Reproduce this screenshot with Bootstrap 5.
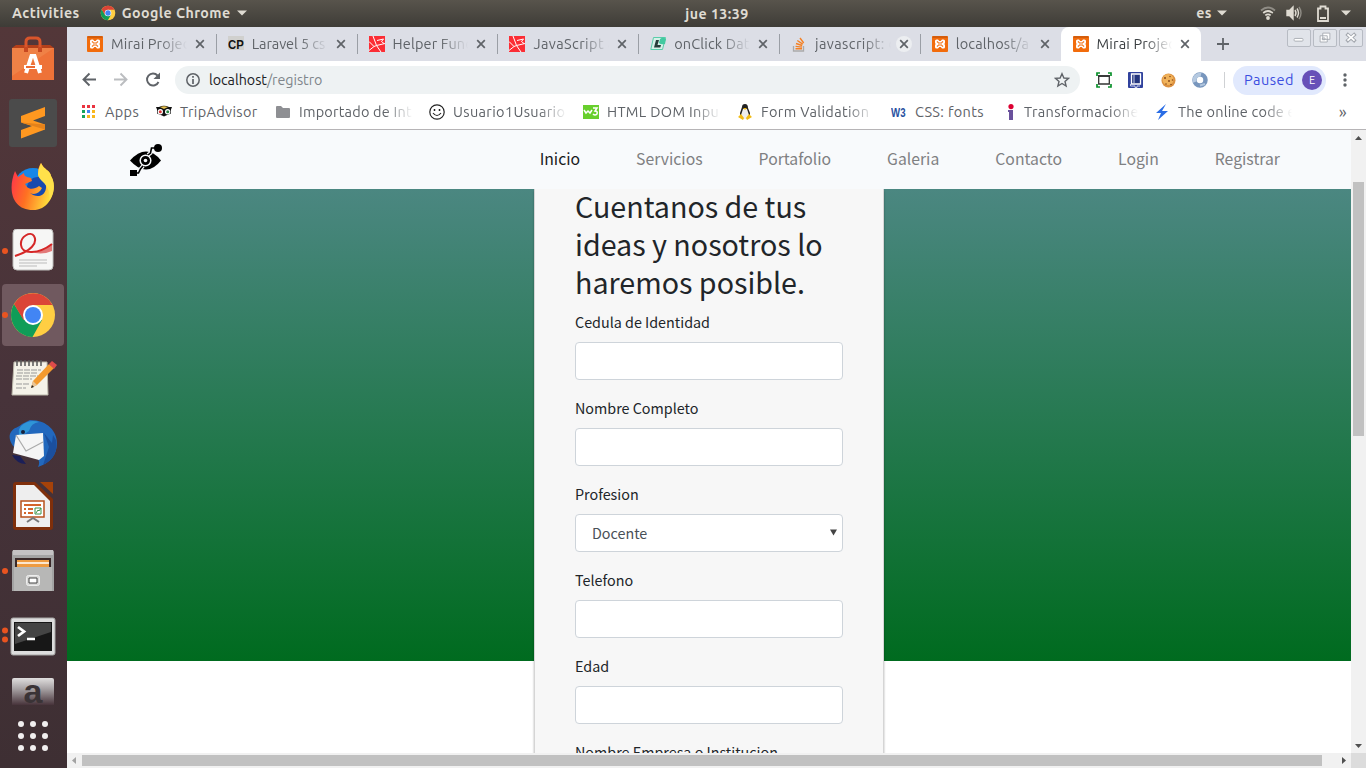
<!DOCTYPE html>
<html lang="es">
<head>
<meta charset="utf-8">
<title>Mirai Project</title>
<link href="https://cdn.jsdelivr.net/npm/bootstrap@5.3.0/dist/css/bootstrap.min.css" rel="stylesheet">
<style>
body{width:1366px;height:768px;overflow:hidden;font:14.5px/20px Ubuntu,"Noto Sans",sans-serif;color:#5f6368;background:#fff}
svg{display:block;flex:none}
.panel{height:27px;background:linear-gradient(#58544c,#3e3c37);color:#dfdbd2;font-weight:700;font-size:14.2px;letter-spacing:.45px;padding:0 15px 1px 12px}
.dock{width:67px;padding-right:1px;background:linear-gradient(#533739,#47333a 50%,#3e2f33)}
.launcher{height:64px;flex:none}
.launcher.chosen::before{content:"";position:absolute;left:2px;top:1px;width:62px;height:62px;border-radius:4px;background:#70595f}
.launcher svg{position:relative}
.dots{position:absolute;left:2px;top:50%;transform:translateY(-50%)}
.dots i{display:block;width:6px;height:6px;border-radius:50%;background:#e95420;margin:3px 0}
.tabstrip{height:34px;background:#dcdee6;padding-left:8px}
.tab{width:140.8px;padding:0 8px 0 12px;flex:none;position:relative;letter-spacing:.15px}
.tab+.tab:not(.current)::before{content:"";position:absolute;left:0;top:7px;height:20px;width:1px;background:#9a9ea5}
.tab.current{background:#fff;border-radius:8px 8px 0 0;color:#3c4043}
.fade-text{flex:1;min-width:0;overflow:hidden;white-space:nowrap;-webkit-mask-image:linear-gradient(90deg,#000 calc(100% - 28px),transparent);mask-image:linear-gradient(90deg,#000 calc(100% - 28px),transparent)}
.tab .fade-text{margin:0 5px 0 8px}
.knob{width:16px;height:16px;border-radius:50%;flex:none}
.knob.lit{background:#eceef1}
.winbtns{margin-left:auto;padding:2px 3px 0 0;gap:2px}
.winbtns svg{background:#e1e4ea;border:1px solid #b7bbc3;border-radius:2px}
.toolbar{height:37px;background:#fff;padding:1px 19px 0 14px}
.address{width:905px;height:28px;border-radius:14px;background:#eef2f3;padding:0 10px 0 11px;margin-left:14px}
.profile{width:93px;height:29px;border-radius:15px;background:#e1e9fd;color:#3b4ee0;padding:0 4px 0 11px;letter-spacing:.5px}
.avatar{width:20px;height:20px;border-radius:50%;background:#6750b8;color:#fff;font-size:11px;letter-spacing:0}
.bookmarks{height:31px;display:grid;grid-template-columns:75px 119px 154px 154px 154px 154px 109px 154px 154px 1fr;padding:0 0 3px 14px;align-items:center;letter-spacing:.35px}
.bookmarks>a{display:flex;gap:8px;align-items:center;color:inherit;text-decoration:none}
.bookmarks .fade-text{flex:none;width:114px}
.bookmarks .whole{white-space:nowrap}
.web{border-top:1px solid #b6b4b6;font-family:"Source Sans Pro","Noto Sans CJK JP",sans-serif;color:#212529;height:624px}
.site-nav{height:59px;background:#f8fafc;padding:0 71px 0 62px;position:relative;z-index:2}
.site-nav .nav{gap:56px;font-size:15.76px}
.site-nav .nav-link{padding:0 0 1px;color:#7f8082;line-height:24px}
.site-nav .nav-link.active{color:#1a1b1c}
.hero{height:472px;background:linear-gradient(#4b8781,#006b1f)}
.signup{display:flow-root;width:350px;height:640px;background:#f7f7f7;border:1px solid #d5d5d5;box-shadow:0 2px 2px rgba(0,0,0,.3);padding:0 40px}
.signup h2{font-size:28.65px;line-height:38.4px;margin:-2.4px 0 8px;font-weight:400}
.signup .form-label{display:block;font-size:14.33px;line-height:24px;margin-bottom:8px}
.signup .form-control{height:38px;border:1px solid #ced4da;border-radius:4px;margin-bottom:16px;font-size:14.33px;color:#495057;padding:6px 16px;background:#fff}
.vbar{width:15px;background:#f1f1f1}
.hbar{height:15px;background:#f1f1f1}
</style>
<script src="https://cdn.jsdelivr.net/npm/bootstrap@5.3.0/dist/js/bootstrap.bundle.min.js"></script>
</head>
<body class="d-flex flex-column">
<svg width="0" height="0" class="position-absolute">
<symbol id="xampp" viewBox="0 0 16 16"><rect width="16" height="16" rx="1" fill="#f26c0c"/><path d="M.5 1h15" stroke="#b84e0a"/><path d="M4.500 3.500H6L7.300 5h1.400L10 3.500h1.500Q13 3.500 13 5v1.500L12.500 8l.5 1.500V11q0 1.500-1.500 1.500H10L8.700 11H7.300L6 12.500H4.500Q3 12.500 3 11V9.500L3.500 8 3 6.500V5q0-1.500 1.500-1.500z" fill="#fff"/><path d="M4.800 5.800H6V7h4V5.800h1.200M4.800 10.200H6V9h4v1.200h1.200" fill="none" stroke="#f26c0c" stroke-width="1"/></symbol>
<symbol id="laravel" viewBox="0 0 16 16"><path d="M0 0h16v16H0z" fill="#fb2d35"/><path d="M4 0l3.500 9.500L16 7.500M0 5.500l5 5 2.500-1L12 16M0 14.500l5-4M8 4.500L14.500 3l-2 2.500 2.500 2" stroke="#fff" stroke-width="1" fill="none"/></symbol>
<symbol id="close" viewBox="0 0 16 16"><path d="M4.200 4.200l7.600 7.600m0-7.600l-7.600 7.600" stroke="#5f6368" stroke-width="1.700"/></symbol>
<symbol id="chrome" viewBox="0 0 48 48"><circle cx="24" cy="24" r="22" fill="#ffce43"/><path d="M5 13A22 22 0 0 0 23.500 46L33 29 24 24 15 29z" fill="#109d58"/><path d="M24 14h19.500A22 22 0 0 0 5 13l9.500 16z" fill="#db4437"/><circle cx="24" cy="24" r="10" fill="#fff"/><circle cx="24" cy="24" r="8" fill="#4285f4"/></symbol>
<symbol id="caret" viewBox="0 0 10 6"><path d="M0 .5h10L5 5.500z" fill="#dfdbd2"/></symbol>
</svg>

<header class="panel d-flex align-items-center position-relative">
<span>Activities</span>
<svg width="16" height="16" style="margin-left:20px;margin-right:6px"><use href="#chrome"/></svg>
<span>Google Chrome</span><svg style="margin-left:6px" width="10" height="6"><use href="#caret"/></svg>
<span class="position-absolute top-50 translate-middle text-nowrap" style="left:717px">jue 13:39</span>
<span class="ms-auto">es</span><svg style="margin:0 33px 0 5px" width="10" height="6"><use href="#caret"/></svg>
<svg width="16" height="16" viewBox="0 0 16 16" fill="none" stroke-width="1.700"><path d="M1 5.500q7-6 14 0" stroke="#8f8c85"/><path d="M3.200 8q4.800-4 9.600 0M5.300 10.400q2.700-2.200 5.400 0" stroke="#dfdbd2"/><circle cx="8" cy="13" r="1.900" fill="#dfdbd2"/></svg>
<svg style="margin:0 14px 0 10px" width="17" height="16" viewBox="0 0 17 16" fill="none" stroke="#dfdbd2" stroke-width="1.400"><path d="M1 5.500h2.500L7 2v12l-3.500-3.500H1z" fill="#dfdbd2"/><path d="M9 5q2 3 0 6M11 3.500q3 4.500 0 9"/><path d="M13 2q4 6 0 12" stroke="#8f8c85"/></svg>
<svg style="margin-right:12px" width="12" height="17" viewBox="0 0 12 17"><path d="M1 3.500h2.500v-2h5v2H11v12.500H1z" fill="none" stroke="#dfdbd2" stroke-width="1.800"/><path d="M3 13h6" stroke="#dfdbd2" stroke-width="2"/></svg>
<svg width="10" height="6"><use href="#caret"/></svg>
</header>

<div class="d-flex flex-fill" style="min-height:0">
<aside class="dock d-flex flex-column flex-shrink-0">
<div class="launcher d-flex align-items-center justify-content-center position-relative"><svg width="48" height="48" viewBox="0 0 48 48"><path d="M3 13l4-3h34l4 3z" fill="#b5401a"/><path d="M17 16V7q0-4 4-4h6q4 0 4 4v9" fill="none" stroke="#d9552b" stroke-width="3"/><path d="M3 13h42v32H3z" fill="#ee7238"/><path d="M3 13h42l-42 28z" fill="#f08c50" opacity=".6"/><path d="M17 12v5M31 12v5" stroke="#c84820" stroke-width="4"/><path d="M17 38l5.500-17h3L31 38M15 32h18" fill="none" stroke="#fff" stroke-width="4"/><path d="M17 32h9" stroke="#ec6b33" stroke-width="2"/></svg></div>
<div class="launcher d-flex align-items-center justify-content-center position-relative"><svg width="48" height="48" viewBox="0 0 48 48"><rect width="48" height="48" rx="3" fill="#4b4b4b"/><path d="M12 17l24-9v9l-12 4.500 12 4v5L12 39.500V31l11-4-11-3.500z" fill="#ff9820"/><path d="M12 23.500l24 2v5z" fill="#e5821a"/></svg></div>
<div class="launcher d-flex align-items-center justify-content-center position-relative"><svg width="48" height="48" viewBox="0 0 48 48"><defs><linearGradient id="fx" x2="1" y2=".3"><stop stop-color="#ff2d50"/><stop offset=".5" stop-color="#ff7022"/><stop offset="1" stop-color="#ffd83a"/></linearGradient></defs><circle cx="24" cy="24" r="19" fill="#1687e8"/><circle cx="29" cy="25" r="11" fill="#174aae"/><path d="M6 8l3 6 6-4c0 3 2 4 7 5l1 3-7 3 2 3c3 3 8 2 12-1l3 2c-3 6-8 7-12 5 7 6 17 3 16-8 0-4-8-6-8-11 0-5 1-8 3-11 3 7 9 7 10 13 7 10 1 34-18 34C4 47-2 28 6 8z" fill="url(#fx)"/><path d="M29 11q0-5 3-11c3 7 9 7 10 13 5 9 3 18-2 25 2-9-2-15-6-19-3-3-5-5-5-8z" fill="#ffe14a"/></svg></div>
<div class="launcher d-flex align-items-center justify-content-center position-relative"><span class="dots"><i></i></span><svg width="42" height="42" viewBox="0 0 42 42" style="top:-1px"><rect x="1" y="0" width="40" height="41" rx="4" fill="#f6f6f5" stroke="#bebebc"/><path d="M3 27C19 22 26 14 22 7 19 2 8 7 9 16c1 10 18 9 31-1" fill="none" stroke="#d52727" stroke-width="2"/><path d="M18 22q12 2 22-7v7q-12 5-22 0z" fill="#d52727" opacity=".6"/><path d="M7 31h28M7 34h28M7 37h18" stroke="#bbb"/></svg></div>
<div class="launcher chosen d-flex align-items-center justify-content-center position-relative"><span class="dots"><i></i></span><svg width="48" height="48"><use href="#chrome"/></svg></div>
<div class="launcher d-flex align-items-center justify-content-center position-relative"><svg width="48" height="40" viewBox="0 0 48 40" style="top:-1px"><path d="M5 4h33l1 33H3z" fill="#f4f2e8" stroke="#bbb8aa"/><path d="M8 2v6m4-6v6m4-6v6m4-6v6m4-6v6m4-6v6m4-6v6" stroke="#555" stroke-width="1.500"/><path d="M8 12h24M8 15h20M7 18h22M7 21h16M7 26h14M7 30h10" stroke="#999" stroke-dasharray="6 1"/><path d="M22 30l2-7L40 6l5 4-17 17z" fill="#f39a2e"/><path d="M40 6l3-3 5 4-3 4z" fill="#dd4b4b"/><path d="M22 30l2-7 4 4z" fill="#e8c596"/><path d="M22 30l1-3 2 2z" fill="#222"/></svg></div>
<div class="launcher d-flex align-items-center justify-content-center position-relative"><svg width="48" height="48" viewBox="0 0 48 48"><path d="M13 5l8-4c18 0 27 12 27 23 0 12-7 20-19 24 3-6 0-10-7-12C6 35-3 20 2 13 5 8 9 9 13 5z" fill="#2268bd"/><path d="M12 7q8-7 18-4-8 1-10 9l-9 6q-3-6 1-11z" fill="#2f95d8"/><path d="M3 36q5 9 14 9l-6-8z" fill="#1b1f58"/><path d="M7 16l27-2 1 23-5 4L4 34z" fill="#f5f5f5"/><path d="M7 16l10 16 17-9" fill="none" stroke="#aaa" stroke-width="1.200"/><path d="M35 14l5 14-6 18q16-8 13-25l-3-5-1 8z" fill="#1b4f9e"/><circle cx="14" cy="13" r="2" fill="#17223d"/></svg></div>
<div class="launcher d-flex align-items-center justify-content-center position-relative"><svg width="42" height="48" viewBox="0 0 42 48" style="top:-1px"><path d="M1 3q0-3 3-3h19l18 17v28q0 3-3 3H4q-3 0-3-3z" fill="#7f2f0b"/><path d="M28 0h13v12z" fill="#a54209"/><path d="M4 3h18l16 16v26H4z" fill="#eee"/><path d="M9 19h23v16H9z" fill="#fff" stroke="#b8521d" stroke-width="1.500"/><path d="M12 22h17v2H12zM12 26h2v2h-2zm4 0h5v2h-5zm-4 4h2v2h-2zm4 0h5v2h-5z" fill="#d4662b"/><path d="M23 26h6v6h-6zM24 31l2-3 1 1 2-3" fill="none" stroke="#3a944a"/><path d="M15 40l6-4 6 4" fill="none" stroke="#777" stroke-width="2"/></svg></div>
<div class="launcher d-flex align-items-center justify-content-center position-relative"><span class="dots"><i></i></span><svg width="42" height="44" viewBox="0 0 42 44"><path d="M0 3q0-2 3-2h36q3 0 3 2v39H0z" fill="#a3a3a3"/><path d="M1 1h40v5H1z" fill="#c4c2c3"/><path d="M3 9h36v10H3z" fill="#3a2929"/><path d="M5 11h32v8H5z" fill="#ed9b42"/><path d="M5 14h32" stroke="#fff" stroke-width="1.500"/><path d="M2 18h38v24H2z" fill="#b7b7b6"/><rect x="14.500" y="26.500" width="13" height="10" rx="2" fill="#d9d9d8" stroke="#eee"/><path d="M17 29h8v5h-8z" fill="#fff" stroke="#444"/></svg></div>
<div class="launcher d-flex align-items-center justify-content-center position-relative"><span class="dots"><i></i><i></i></span><svg width="46" height="40" viewBox="0 0 46 40" style="top:2px"><rect x="1" y="1" width="44" height="37" rx="2" fill="#ddd" stroke="#a6a6a5"/><path d="M4 5h38v29H4z" fill="#171717"/><path d="M5 6h36v9L5 27z" fill="#444"/><path d="M8 10l6 4.500-6 4.500" fill="none" stroke="#fff" stroke-width="2.800"/><path d="M17 22h8" stroke="#fff" stroke-width="2.500"/></svg></div>
<div class="d-flex justify-content-center" style="height:39px;padding-top:11px"><svg width="42" height="27" viewBox="0 0 42 27" overflow="visible"><defs><linearGradient id="am" x2="0" y2="1"><stop stop-color="#e0dede"/><stop offset=".4" stop-color="#a7a2a4"/><stop offset="1" stop-color="#47333a"/></linearGradient></defs><path d="M0 2q0-2 2-2h38q2 0 2 2v25H0z" fill="url(#am)"/><text x="21" y="24.500" text-anchor="middle" font-family="Liberation Sans" font-weight="700" font-size="34" fill="#3a3336">a</text></svg></div>
<div class="d-flex justify-content-center" style="padding-top:14px"><svg width="32" height="32" viewBox="0 0 32 32" fill="#f1efef"><g id="dr"><circle cx="4" cy="4" r="3"/><circle cx="16" cy="4" r="3"/><circle cx="28" cy="4" r="3"/></g><use href="#dr" y="12"/><use href="#dr" y="24"/></svg></div>
</aside>

<main class="flex-fill d-flex flex-column" style="min-width:0">
<div class="tabstrip d-flex">
<div class="tab d-flex align-items-center"><svg width="16" height="16"><use href="#xampp"/></svg><span class="fade-text">Mirai Projec</span><span class="knob"><svg width="16" height="16"><use href="#close"/></svg></span></div>
<div class="tab d-flex align-items-center"><svg width="16" height="16" viewBox="0 0 16 16"><path d="M0 0h16v14H0z" fill="#d0d0ce"/><text x="0" y="13" font-family="Liberation Sans" font-weight="700" font-size="13.500" textLength="16" lengthAdjust="spacingAndGlyphs" fill="#111">CP</text></svg><span class="fade-text" style="letter-spacing:-.1px">Laravel 5 cs</span><span class="knob"><svg width="16" height="16"><use href="#close"/></svg></span></div>
<div class="tab d-flex align-items-center"><svg width="16" height="16"><use href="#laravel"/></svg><span class="fade-text">Helper Func</span><span class="knob"><svg width="16" height="16"><use href="#close"/></svg></span></div>
<div class="tab d-flex align-items-center"><svg width="16" height="16"><use href="#laravel"/></svg><span class="fade-text" style="letter-spacing:.4px">JavaScript a</span><span class="knob"><svg width="16" height="16"><use href="#close"/></svg></span></div>
<div class="tab d-flex align-items-center"><svg width="16" height="16" viewBox="0 0 16 16"><path d="M3.500 1.500h12l-3 12H.8z" fill="#d5f0e8" stroke="#59cda9"/><path d="M10 3q3-3 6 0l-1 5q-4 1-6-1z" fill="#42c9a0"/><path d="M6 4h3L7.500 9H11l-.7 2.500H4z" fill="#263e3a"/></svg><span class="fade-text">onClick Dat</span><span class="knob"><svg width="16" height="16"><use href="#close"/></svg></span></div>
<div class="tab d-flex align-items-center"><svg width="16" height="16" viewBox="0 0 16 16" fill="none"><path d="M2.500 10v5h10v-5" stroke="#aaa" stroke-width="1.300"/><path d="M4.500 12.800h6.500M4.600 10.400l6.500.7M5 7.500l6.200 2M6.300 4.500l5.400 3.700M9 2l3.700 5" stroke="#f48024" stroke-width="1.400"/></svg><span class="fade-text" style="letter-spacing:.4px">javascript: o</span><span class="knob lit"><svg width="16" height="16"><use href="#close"/></svg></span></div>
<div class="tab d-flex align-items-center"><svg width="16" height="16"><use href="#xampp"/></svg><span class="fade-text">localhost/a</span><span class="knob"><svg width="16" height="16"><use href="#close"/></svg></span></div>
<div class="tab current d-flex align-items-center"><svg width="16" height="16"><use href="#xampp"/></svg><span class="fade-text">Mirai Projec</span><span class="knob"><svg width="16" height="16"><use href="#close"/></svg></span></div>
<svg class="align-self-center" style="margin-left:15px" width="14" height="14" viewBox="0 0 14 14"><path d="M7 1v12M1 7h12" stroke="#5f6368" stroke-width="1.800"/></svg>
<div class="winbtns d-flex align-items-start">
<svg width="24" height="18" viewBox="0 0 24 18"><rect x="6.500" y="9.500" width="10" height="3" rx="1" fill="#fff" stroke="#a5a9b0"/></svg>
<svg width="24" height="18" viewBox="0 0 24 18" fill="#fff" stroke="#a5a9b0"><path d="M9.500 3.500h8v7h-8zM6.500 6.500h8v7h-8zM9 9h3v2H9z"/></svg>
<svg width="24" height="18" viewBox="0 0 24 18"><path d="M7 4l10 9M17 4L7 13" stroke="#a5a9b0" stroke-width="4"/><path d="M8 5l8 7M16 5l-8 7" stroke="#fff" stroke-width="2"/></svg>
</div></div>

<div class="toolbar d-flex align-items-center">
<svg width="80" height="16" viewBox="0 0 80 16" fill="none" stroke="#5f6368" stroke-width="1.900"><path d="M15 7.500H2.500M8.500 1.500l-6 6 6 6"/><path d="M33 7.500h12.500M39.500 1.500l6 6-6 6" stroke="#bbbdc0"/><path d="M77.500 10A6 6 0 1 1 76.500 3.500"/><path d="M79 .5V7h-6.500z" fill="#5f6368" stroke="none"/></svg>
<div class="address d-flex align-items-center">
<svg width="14" height="14" viewBox="0 0 14 14"><circle cx="7" cy="7" r="6.200" fill="none" stroke="#5f6368" stroke-width="1.500"/><path d="M7 6v5M7 3v1.700" stroke="#5f6368" stroke-width="1.700"/></svg>
<span style="margin-left:9px;font-size:14.300px;letter-spacing:-.03px;color:#80868b"><span style="color:#202124">localhost</span>/registro</span>
<svg class="ms-auto" width="16" height="16" viewBox="0 0 16 16"><path d="M8 1.700l1.900 4.300 4.600.4-3.500 3 1.100 4.600L8 11.500 3.900 14 5 9.400l-3.500-3L6.100 6z" fill="none" stroke="#5f6368" stroke-width="1.400"/></svg></div>
<svg style="margin-left:16px" width="16" height="16" viewBox="0 0 16 16" fill="none"><path d="M1 4V1h3M12 1h3v3M15 12v3h-3M4 15H1v-3" stroke="#0b912c" stroke-width="1.700"/><path d="M2.700 4h10.600v8H2.700z" stroke="#333" stroke-width="1.300"/><path d="M2 4h12" stroke="#333" stroke-width="1.700"/></svg>
<svg style="margin-left:16px" width="15" height="16" viewBox="0 0 15 16"><rect width="15" height="16" rx="1" fill="#30429d"/><path d="M3.500 2h9v10h-9z" fill="#24357d" stroke="#fff" stroke-width="1.300"/><path d="M2.500 12v2H7v1.500h2V14h3" fill="none" stroke="#c8cee9"/><path d="M6 3v8" stroke="#c8cee9"/></svg>
<svg style="margin-left:18px" width="15" height="15" viewBox="0 0 15 15"><circle cx="7.500" cy="7.500" r="7" fill="#dc9140"/><circle cx="7" cy="6.500" r="5.500" fill="#f0b25a"/><g fill="#8a4a1d"><circle cx="4" cy="5" r="1"/><circle cx="9" cy="3.500" r=".8"/><circle cx="8" cy="8" r="1"/><circle cx="11.500" cy="7" r=".8"/><circle cx="5" cy="11" r=".8"/><circle cx="10" cy="11.500" r=".8"/></g></svg>
<svg style="margin-left:16px" width="16" height="16" viewBox="0 0 16 16" fill="none"><circle cx="8" cy="8" r="5.500" stroke="#7896bd" stroke-width="4.500"/><path d="M3 10A5.300 5.300 0 0 1 9 2.800" stroke="#b5c9e0" stroke-width="4"/><path d="M8 13.500l5-1.500" stroke="#b1c6de" stroke-width="2"/></svg>
<span style="width:1px;height:16px;background:#cfd1d4;margin:0 8px 0 16px"></span>
<div class="profile d-flex align-items-center justify-content-between">Paused<span class="avatar d-flex align-items-center justify-content-center">E</span></div>
<svg class="ms-auto" width="4" height="14" viewBox="0 0 4 14" fill="#5f6368"><circle cx="2" cy="2" r="1.700"/><circle cx="2" cy="7" r="1.700"/><circle cx="2" cy="12" r="1.700"/></svg>
</div>

<nav class="bookmarks">
<a><svg width="16" height="16" viewBox="0 0 16 16"><path d="M1 1h3v3H1zm5 0h3v3H6zm5 0h3v3h-3z" fill="#ea3340"/><path d="M1 6h3v3H1z" fill="#16a45b"/><path d="M6 6h3v3H6z" fill="#4285f4"/><path d="M11 6h3v3h-3z" fill="#f9b71c"/><path d="M1 11h3v3H1z" fill="#16a45b"/><path d="M6 11h3v3H6zm5 0h3v3h-3z" fill="#f9b71c"/></svg><span class="whole">Apps</span></a>
<a><svg width="16" height="16" viewBox="0 0 16 16"><path d="M0 3h3q5-2.500 10 0h3l-1 2.500v4l-5 2-2 1-2-1-5-2v-4z" fill="#111"/><path d="M4 3q4-1.500 8 0L8 5z" fill="#e6c04e"/><circle cx="4.300" cy="7.700" r="2.700" fill="#fff"/><circle cx="11.700" cy="7.700" r="2.700" fill="#fff"/><circle cx="4.300" cy="7.700" r="1.500" fill="#d33"/><circle cx="11.700" cy="7.700" r="1.500" fill="#298744"/></svg><span class="whole">TripAdvisor</span></a>
<a><svg width="16" height="16" viewBox="0 0 16 16"><path d="M1 3q0-1 1-1h4l2 2h6q1 0 1 1v8q0 1-1 1H2q-1 0-1-1z" fill="#8e8f93"/></svg><span class="fade-text" style="letter-spacing:.2px">Importado de Int</span></a>
<a><svg width="16" height="16" viewBox="0 0 16 16" fill="none" stroke="#222" stroke-width="1.200"><circle cx="8" cy="8" r="7.200"/><path d="M4 9q4 5 8 0"/><path d="M5.500 5v2M10.500 5v2" stroke-width="1.500"/></svg><span class="fade-text">Usuario1Usuario</span></a>
<a><svg width="16" height="16" viewBox="0 0 16 16"><path d="M0 1h16v14H0z" fill="#68cf2d"/><path d="M1 6l2 3 2-2 2 2 2-3M10 4h4l-2 3q3 0 2 3-2 2-4 0" fill="none" stroke="#fff" stroke-width="1.500"/></svg><span class="fade-text">HTML DOM Inpu</span></a>
<a><svg width="16" height="16" viewBox="0 0 16 16"><path d="M5 3q0-3 3-3t3 4l2 5v5H3V9z" fill="#222"/><path d="M6 5h4l2 6-2 4H6l-2-4z" fill="#eee"/><path d="M6 4h4L8 6zM1 13l3-3 3 4-1 2zM15 13l-3-3-3 4 1 2z" fill="#f1bb14"/></svg><span class="fade-text">Form Validation</span></a>
<a><svg width="16" height="16" viewBox="0 0 16 16"><text x="0" y="13" font-family="Liberation Sans" font-weight="700" font-size="13" textLength="15" lengthAdjust="spacingAndGlyphs" fill="#2850a0">W3</text></svg><span class="whole">CSS: fonts</span></a>
<a><svg width="16" height="16" viewBox="0 0 16 16"><circle cx="11" cy="2.600" r="2.600" fill="#dc0032"/><path d="M8 6h5v10H9v-8H8z" fill="#6a519c"/></svg><span class="fade-text">Transformacione</span></a>
<a><svg width="16" height="16" viewBox="0 0 16 16"><path d="M12 0L2 9h5l-3 7L14 7H8z" fill="#2a6de5"/></svg><span class="fade-text" style="letter-spacing:.2px">The online code e</span></a>
<span class="text-end" style="padding-right:19px;font-size:17px">»</span>
</nav>

<section class="web d-flex flex-shrink-0">
<div class="flex-fill overflow-hidden">
<nav class="site-nav d-flex align-items-center justify-content-between">
<svg width="34" height="32" viewBox="0 0 34 32"><path d="M1 16.500Q9 7.500 17 7.500t15 9Q25 25.500 17 25.500T1 16.500z"/><path d="M19 11l2.500-2L22.500 4H27M14 22l-2.500 3-2 4H6" fill="none" stroke="#f8fafc" stroke-width="4"/><path d="M19 11l2.500-2L22.500 4H27M14 22l-2.500 3-2 4H6" fill="none" stroke="#000" stroke-width="1.600"/><circle cx="16.500" cy="16.500" r="5.300" stroke="#f8fafc" stroke-width="1.500"/><circle cx="16.500" cy="16.500" r="1.800" fill="#f8fafc"/><circle cx="29" cy="4" r="4"/><path d="M1 26h7v6H1z"/></svg>
<ul class="nav flex-nowrap"><li><a class="nav-link active">Inicio</a></li><li><a class="nav-link">Servicios</a></li><li><a class="nav-link">Portafolio</a></li><li><a class="nav-link">Galeria</a></li><li><a class="nav-link">Contacto</a></li><li><a class="nav-link">Login</a></li><li><a class="nav-link">Registrar</a></li></ul>
</nav>
<div class="hero">
<form class="signup mx-auto border-top-0">
<h2>Cuentanos de tus ideas y nosotros lo haremos posible.</h2>
<label class="form-label">Cedula de Identidad</label><input class="form-control">
<label class="form-label">Nombre Completo</label><input class="form-control">
<label class="form-label">Profesion</label><div class="form-control d-flex align-items-center justify-content-between" style="padding-right:5px">Docente<svg width="7" height="7" viewBox="0 0 7 7" style="margin-top:-1px"><path d="M0 .5h7L3.500 6.500z" fill="#444"/></svg></div>
<label class="form-label">Telefono</label><input class="form-control">
<label class="form-label">Edad</label><input class="form-control">
<label class="form-label">Nombre Empresa o Institucion</label>
</form>
</div></div>
<div class="vbar flex-shrink-0 d-flex flex-column align-items-center justify-content-between">
<svg width="15" height="306" viewBox="0 0 15 306"><path d="M4 10h7L7.500 6z" fill="#505050"/><path d="M2 52h11v254H2z" fill="#c1c1c1"/></svg>
<svg width="15" height="15"><path d="M4 6h7l-3.500 4z" fill="#505050"/></svg></div>
</section>
<div class="hbar d-flex flex-shrink-0"><svg width="1284" height="15"><path d="M9 4v7L5 7.500z" fill="#a3a3a3"/><path d="M15 2h1240v11H15z" fill="#c1c1c1"/><path d="M1275 4v7l4-3.500z" fill="#505050"/></svg><span class="flex-fill" style="background:#dcdcdc"></span></div>
</main>
</div>
</body>
</html>
